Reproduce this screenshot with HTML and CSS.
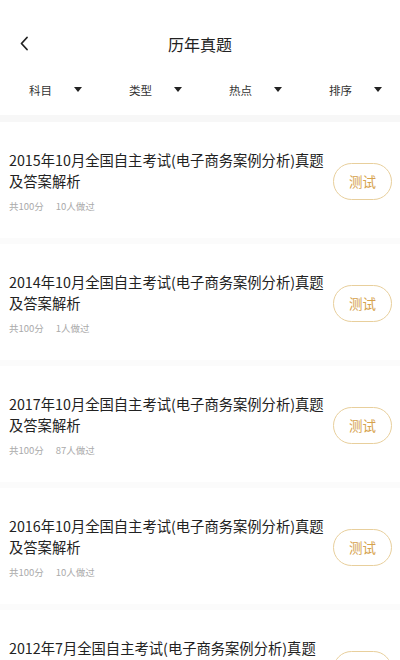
FILE: index.html
```html
<!DOCTYPE html>
<html lang="zh-CN">
<head>
<meta charset="utf-8">
<title>历年真题</title>
<link rel="stylesheet" href="styles.css">
</head>
<body>
<div class="page">
  <header class="nav">
    <span class="back">
      <svg width="10" height="15" viewBox="0 0 10 15"><path d="M8 1.5 L2.5 7.5 L8 13.5" fill="none" stroke="#222" stroke-width="1.8" stroke-linecap="round" stroke-linejoin="round"/></svg>
    </span>
    <h1 class="title">历年真题</h1>
  </header>
  <nav class="filters">
    <div class="filter"><span>科目</span><i class="tri"></i></div>
    <div class="filter"><span>类型</span><i class="tri"></i></div>
    <div class="filter"><span>热点</span><i class="tri"></i></div>
    <div class="filter"><span>排序</span><i class="tri"></i></div>
  </nav>
  <div class="sep"></div>
  <ul class="list">
    <li class="item">
      <div class="info">
        <p class="name">2015年10月全国自主考试(电子商务案例分析)真题及答案解析</p>
        <p class="meta"><span>共100分</span><span>10人做过</span></p>
      </div>
      <button class="test">测试</button>
    </li>
    <li class="item">
      <div class="info">
        <p class="name">2014年10月全国自主考试(电子商务案例分析)真题及答案解析</p>
        <p class="meta"><span>共100分</span><span>1人做过</span></p>
      </div>
      <button class="test">测试</button>
    </li>
    <li class="item">
      <div class="info">
        <p class="name">2017年10月全国自主考试(电子商务案例分析)真题及答案解析</p>
        <p class="meta"><span>共100分</span><span>87人做过</span></p>
      </div>
      <button class="test">测试</button>
    </li>
    <li class="item">
      <div class="info">
        <p class="name">2016年10月全国自主考试(电子商务案例分析)真题及答案解析</p>
        <p class="meta"><span>共100分</span><span>10人做过</span></p>
      </div>
      <button class="test">测试</button>
    </li>
    <li class="item">
      <div class="info">
        <p class="name">2012年7月全国自主考试(电子商务案例分析)真题及答案解析</p>
        <p class="meta"><span>共100分</span><span>10人做过</span></p>
      </div>
      <button class="test">测试</button>
    </li>
  </ul>
</div>
</body>
</html>
```
FILE: styles.css
```css
* { box-sizing: border-box; }
html, body { margin: 0; padding: 0; background: #fff; }
body {
  font-family: "Noto Sans CJK SC", "Noto Sans", sans-serif;
  color: #222;
  width: 400px;
  height: 660px;
  overflow: hidden;
}
.page { width: 400px; }
.nav {
  position: relative;
  height: 68px;
  padding-top: 20px;
  display: flex;
  align-items: center;
  justify-content: center;
}
.nav .back {
  position: absolute;
  left: 19px;
  top: 36px;
  width: 10px;
  height: 15px;
  display: block;
}
.nav .back svg { display: block; }
.title {
  margin: 0;
  font-size: 16px;
  font-weight: 400;
  line-height: 48px;
  height: 48px;
  color: #222;
}
.filters {
  display: grid;
  grid-template-columns: repeat(4, 100px);
  height: 47px;
  padding-bottom: 4px;
}
.filter {
  display: flex;
  align-items: center;
  padding-left: 29px;
  gap: 22px;
  font-size: 11.5px;
  color: #333;
}
.tri {
  display: block;
  width: 0;
  height: 0;
  border-left: 4px solid transparent;
  border-right: 4px solid transparent;
  border-top: 5px solid #222;
}
.sep { height: 7px; background: #f7f7f7; }
.list { list-style: none; margin: 0; padding: 0; }
.item {
  display: flex;
  align-items: center;
  gap: 4px;
  padding: 27px 8px 25px 9px;
  border-bottom: 6px solid #fbfbfb;
}
.info { flex: 1; min-width: 0; }
.name {
  margin: 0;
  font-size: 14.3px;
  line-height: 21px;
  color: #222;
}
.meta {
  margin: 8px 0 0;
  display: flex;
  gap: 12px;
  font-size: 9.5px;
  line-height: 14px;
  color: #aaa;
}
.test {
  flex: none;
  width: 59px;
  height: 37px;
  border: 1px solid #e8cf9c;
  border-radius: 19px;
  background: #fff;
  color: #d6a24c;
  font-family: inherit;
  font-size: 13.5px;
  padding: 0;
}
```
